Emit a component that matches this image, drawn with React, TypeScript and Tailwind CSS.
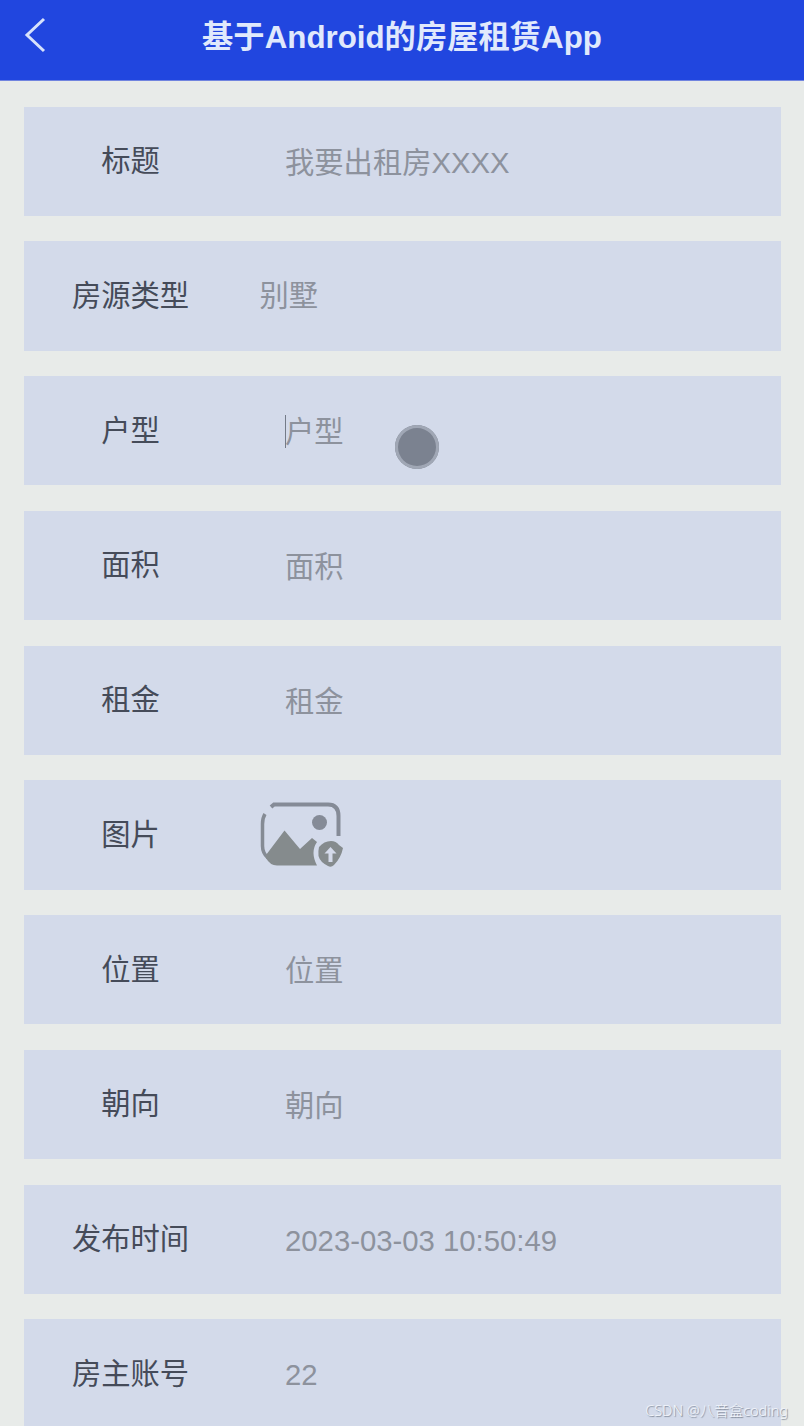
import type { ReactNode } from "react";

type Field = {
	label: string;
	value?: string;
	kind?: "input" | "select" | "image";
	focused?: boolean;
};

const fields: Field[] = [
	{ label: "标题", value: "我要出租房XXXX" },
	{ label: "房源类型", value: "别墅", kind: "select" },
	{ label: "户型", value: "户型", focused: true },
	{ label: "面积", value: "面积" },
	{ label: "租金", value: "租金" },
	{ label: "图片", kind: "image" },
	{ label: "位置", value: "位置" },
	{ label: "朝向", value: "朝向" },
	{ label: "发布时间", value: "2023-03-03 10:50:49" },
	{ label: "房主账号", value: "22" },
];

function UploadIcon() {
	return (
		<svg className="ml-[22px] h-[66px] w-[84px]" viewBox="0 0 84 66" fill="none">
			<path d="M11 5L14 2.5H68Q78.5 2.5 78.5 14V34" stroke="#858b97" strokeWidth="4" />
			<path d="M5 12Q2.5 16 2.5 22V44Q2.5 51 8 56" stroke="#858b94" strokeWidth="3.5" />
			<path d="M6 53L24.5 28.5L40 47L52 36L57 40Q50 50 57 63.5H17Q10 63.5 6 56Z" fill="#858b8d" />
			<circle cx="59.5" cy="20.5" r="7.5" fill="#858b97" />
			<path
				d="M59 45Q64 39 71 39Q76 39 79 43L83 46Q81 56 74 63Q71 66 68 64Q60 60 58.5 54Q58 49 59 45Z"
				fill="#858b8d"
			/>
			<path d="M70.5 60V49" stroke="#d4daea" strokeWidth="4" />
			<path d="M64.5 51.5L70.5 45L76.5 51.5Z" fill="#d4daea" />
		</svg>
	);
}

function FieldRow({ label, children }: { label: string; children: ReactNode }) {
	return (
		<div className="flex h-[109.25px] shrink-0 items-center bg-[#d3daea]">
			<div className="w-[214px] shrink-0 text-center text-[#454b59]">{label}</div>
			{children}
		</div>
	);
}

function FieldValue({ field }: { field: Field }) {
	if (field.kind === "image") {
		return <UploadIcon />;
	}
	if (field.kind === "select") {
		return <div className="ml-[22px] text-[#8d929d]">{field.value}</div>;
	}
	return (
		<div className="relative ml-[47.5px] pt-[3px] text-[#8d929d]">
			{field.focused && (
				<>
					<span className="absolute top-[8px] left-0 h-[33px] w-px bg-[#747b88]" />
					<span className="absolute top-[18px] left-[110px] size-[44px] rounded-full bg-[#7b8290] ring-3 ring-[#a0a7b5] ring-inset" />
				</>
			)}
			{field.value}
		</div>
	);
}

export default function App() {
	return (
		<div className="relative h-[1426px] w-full overflow-hidden bg-[#e8ebe9] font-['Liberation_Sans','Noto_Sans_CJK_SC',sans-serif] text-[29.3px] leading-[44px]">
			<header className="grid h-[81px] grid-cols-[1fr_auto_1fr] items-center border-b border-[#7184df] bg-[#2146df] pb-[4px]">
				<svg className="relative -top-[3px] ml-[23px] h-[36px] w-[24px]" viewBox="0 0 24 36" fill="none">
					<path d="M21 2L4 18L21 34" stroke="#d7e2fb" strokeWidth="3" />
				</svg>
				<h1 className="text-[31.3px] font-bold text-[#e0e9fc]">基于Android的房屋租赁App</h1>
			</header>
			<main className="flex flex-col gap-[25.5px] pt-[25.5px] pr-[23px] pl-[23.5px]">
				{fields.map((field) => (
					<FieldRow key={field.label} label={field.label}>
						<FieldValue field={field} />
					</FieldRow>
				))}
			</main>
			<div className="absolute right-[16px] bottom-[5px] font-['Noto_Sans','Noto_Sans_CJK_SC',sans-serif] text-[14.5px] leading-[22px] font-light text-[#f2f5fb] [text-shadow:1px_1px_1px_#7f8796]">
				CSDN @八音盒coding
			</div>
		</div>
	);
}
